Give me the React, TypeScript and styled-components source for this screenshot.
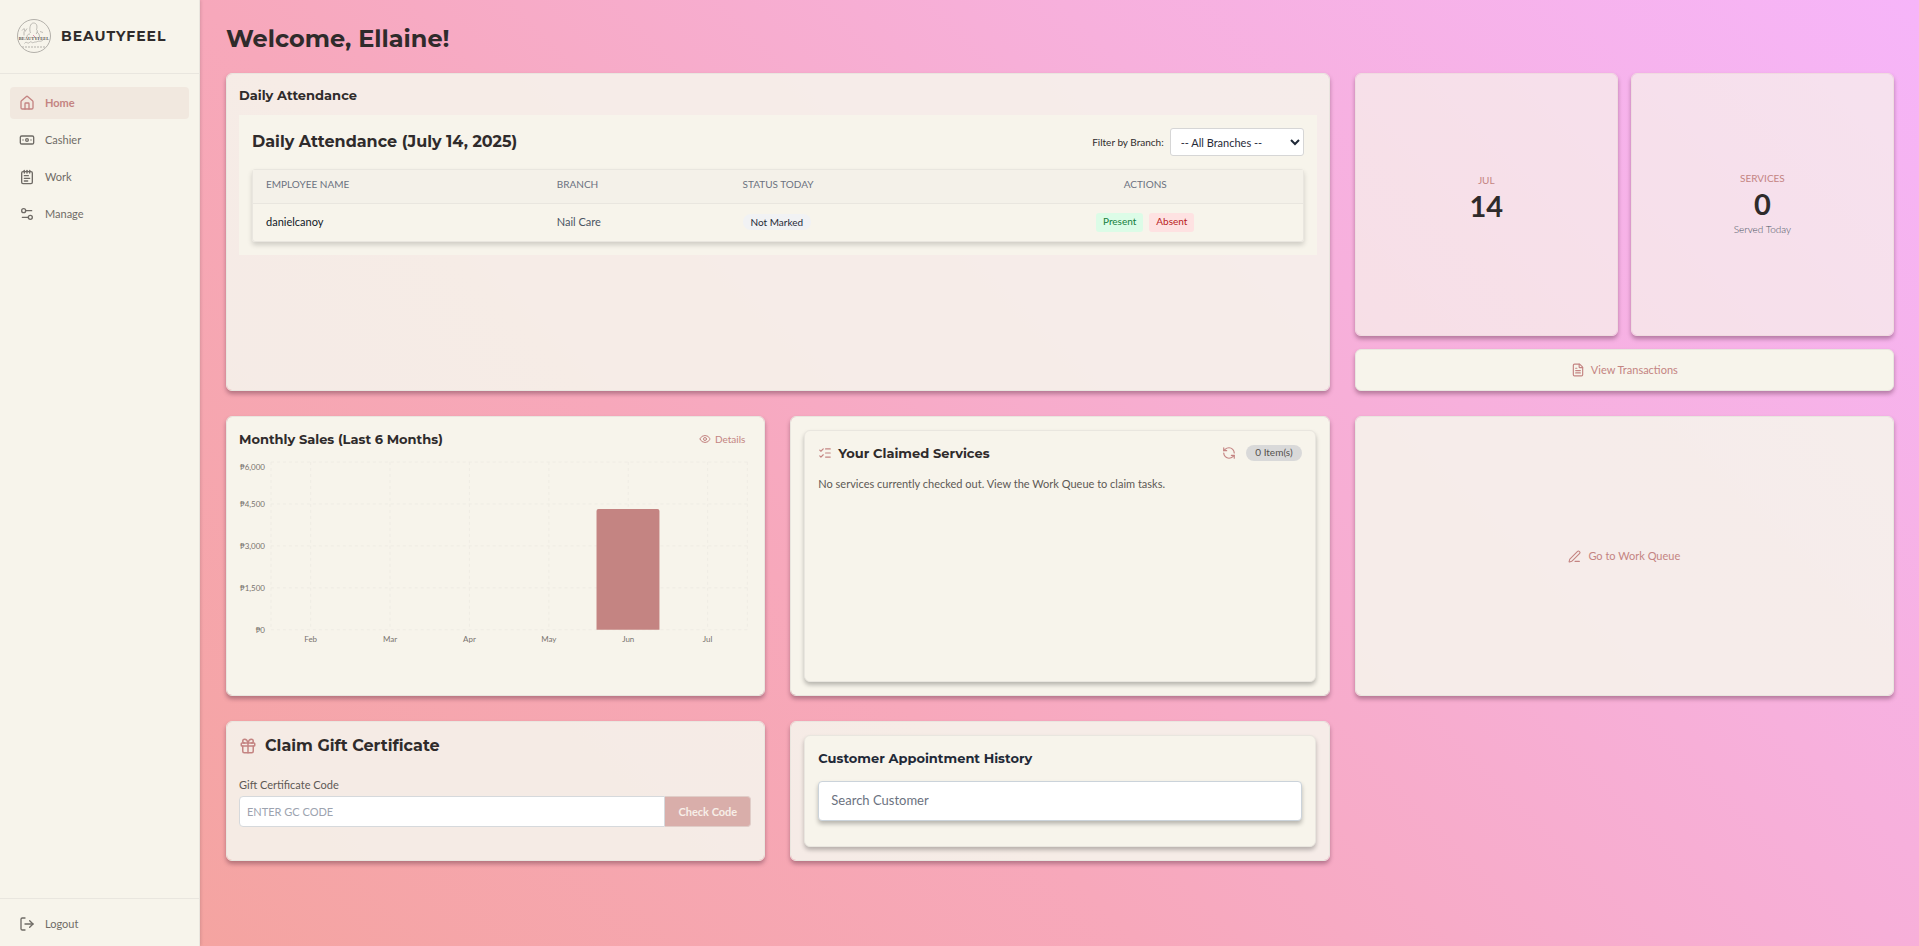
import React from "react";
import styled, { createGlobalStyle, css } from "styled-components";
import {
  House, Banknote, NotepadText, Settings2, LogOut, FileText, Eye, ListChecks,
  RefreshCcw, PenLine, Gift,
} from "lucide-react";

const heading = `"Montserrat", "Inter", sans-serif`;
const ink = "#2f2b2b";
const rose = "#c48482";
const cream = "#f7f4eb";
const line = "#e9e6df";

const Global = createGlobalStyle`
  *, *::before, *::after { box-sizing: border-box; }
  body { margin: 0; font-family: "Lato", sans-serif; font-size: 11px; line-height: 16px; color: ${ink}; }
  h1, h2, h3, p { margin: 0; }
  button, input, select { font: inherit; }
`;

const Shell = styled.div`
  display: flex;
  min-height: 100vh;
  background: linear-gradient(45deg, #f4a39b 0%, #f7a8bb 40%, #f7b0dc 70%, #f6b5f9 100%);
`;
const Sidebar = styled.aside`
  display: flex;
  flex-direction: column;
  flex: none;
  width: 200px;
  background: ${cream};
  border-right: 1px solid ${line};
  box-shadow: 1px 0 3px rgba(0, 0, 0, 0.12);
`;
const Brand = styled.div`
  display: flex;
  align-items: center;
  gap: 9px;
  height: 74px;
  padding: 0 16px 2px;
  border-bottom: 1px solid ${line};
`;
const BrandName = styled.span`
  font-family: ${heading};
  font-weight: 700;
  font-size: 14px;
  letter-spacing: 1px;
`;
const Nav = styled.nav`
  display: flex;
  flex-direction: column;
  gap: 5px;
  padding: 13px 10px;
`;
const NavLink = styled.a<{ $active?: boolean }>`
  display: flex;
  align-items: center;
  gap: 10px;
  height: 32px;
  padding: 0 9px;
  border-radius: 4px;
  color: #6f6b66;
  text-decoration: none;
  ${(p) => p.$active && css`
    color: ${rose};
    font-weight: 700;
    background: #f1e8df;
  `}
`;
const SidebarFoot = styled.div`
  margin-top: auto;
  border-top: 1px solid ${line};
  padding: 9px 10px 6px;
`;
const LogoutButton = styled.button`
  display: flex;
  align-items: center;
  gap: 10px;
  height: 32px;
  width: 100%;
  padding: 0 9px;
  border: 0;
  background: none;
  color: #6f6b66;
`;

const Main = styled.main`
  flex: 1;
  min-width: 0;
  padding: 23px 25px 24px 26px;
`;
const PageTitle = styled.h1`
  font-family: ${heading};
  font-weight: 700;
  font-size: 24px;
  line-height: 32px;
  margin-bottom: 18px;
`;
const Grid = styled.div`
  display: grid;
  grid-template-columns: repeat(3, minmax(0, 1fr));
  gap: 25px;
`;
const Card = styled.section<{ $tone?: "solid" | "veil" | "tint"; $wide?: boolean; $min?: number }>`
  display: flex;
  flex-direction: column;
  min-width: 0;
  padding: 12px;
  border: 1px solid ${line};
  border-radius: 6px;
  min-height: ${(p) => p.$min ?? 0}px;
  background: ${(p) =>
    p.$tone === "veil" ? "rgba(245, 243, 235, 0.9)" : p.$tone === "tint" ? "rgba(247, 244, 235, 0.7)" : cream};
  background-clip: padding-box;
  border-color: ${(p) => (p.$tone === "tint" ? "#f0dbe0" : line)};
  box-shadow: 0 3px 4px rgba(60, 20, 40, 0.35);
  ${(p) => p.$wide && css`grid-column: span 2;`}
`;
const CardTitle = styled.h2<{ $large?: boolean; $navy?: boolean }>`
  font-family: ${heading};
  font-weight: 700;
  font-size: ${(p) => (p.$large ? 16 : 13)}px;
  line-height: ${(p) => (p.$large ? 24 : 18)}px;
  color: ${(p) => (p.$navy ? "#1f2937" : ink)};
`;
const Row = styled.div<{ $gap?: number; $between?: boolean }>`
  display: flex;
  align-items: center;
  gap: ${(p) => p.$gap ?? 8}px;
  justify-content: ${(p) => (p.$between ? "space-between" : "flex-start")};
`;

const AttendancePanel = styled.div`
  margin-top: 11px;
  padding: 13px;
  background: ${cream};
`;
const FilterLabel = styled.label`
  font-size: 10px;
`;
const BranchSelect = styled.select`
  width: 134px;
  height: 28px;
  padding: 0 6px;
  border: 1px solid #d6d6d6;
  border-radius: 3px;
  background: #fff;
  color: #1f2937;
`;
const TableFrame = styled.div`
  margin-top: 13px;
  border: 1px solid ${line};
  border-radius: 3px;
  box-shadow: 0 3px 5px rgba(0, 0, 0, 0.16);
`;
const Table = styled.table`
  width: 100%;
  border-collapse: collapse;
  table-layout: fixed;
  th, td { text-align: left; padding: 0 13px; }
  th {
    height: 33px;
    padding-bottom: 4px;
    font-weight: 400;
    font-size: 10px;
    color: #6b7280;
    background: #f4f1e9;
    border-bottom: 1px solid ${line};
  }
  td { height: 38px; color: #111827; }
  td:nth-child(2) { color: #4b5563; }
  th:last-child { text-align: center; }
`;
const Status = styled.span`
  display: inline-block;
  padding: 0 8px;
  border-radius: 8px;
  background: #f1f2f4;
  color: #1f2937;
  font-size: 10px;
`;
const Actions = styled.div`
  display: flex;
  justify-content: center;
  gap: 6px;
`;
const MarkButton = styled.button<{ $bad?: boolean }>`
  height: 19px;
  padding: 0 7px 2px;
  border: 0;
  border-radius: 3px;
  font-size: 10px;
  line-height: 16px;
  color: ${(p) => (p.$bad ? "#b91c1c" : "#15803d")};
  background: ${(p) => (p.$bad ? "#fee2e2" : "#dcfce7")};
`;

const SideStack = styled.div`
  display: flex;
  flex-direction: column;
  gap: 13px;
`;
const StatRow = styled.div`
  display: grid;
  grid-template-columns: 1fr 1fr;
  gap: 13px;
`;
const StatCard = styled(Card)<{ $raised?: boolean }>`
  aspect-ratio: 1;
  align-items: center;
  justify-content: center;
  padding-bottom: ${(p) => (p.$raised ? 26 : 15)}px;
`;
const StatLabel = styled.p`
  font-size: 10px;
  color: ${rose};
`;
const StatValue = styled.p`
  font-size: 29px;
  line-height: 36px;
  font-weight: 700;
`;
const StatNote = styled.p`
  font-size: 10px;
  font-weight: 300;
  line-height: 14px;
  color: #4b5563;
`;
const WideButton = styled.button`
  display: flex;
  flex: 1;
  align-items: center;
  justify-content: center;
  gap: 6px;
  min-height: 42px;
  padding: 0 0 1px;
  border: 1px solid ${line};
  border-radius: 6px;
  background: ${cream};
  color: ${rose};
  box-shadow: 0 3px 4px rgba(60, 20, 40, 0.35);
`;
const TextButton = styled.button<{ $small?: boolean }>`
  display: inline-flex;
  align-items: center;
  justify-content: center;
  gap: ${(p) => (p.$small ? 4 : 7)}px;
  padding: 0;
  border: 0;
  background: none;
  color: ${rose};
  font-size: ${(p) => (p.$small ? 10 : 11)}px;
`;
const QueueCard = styled(Card)`
  align-items: center;
  justify-content: center;
`;
const ChartHead = styled(Row)`
  padding: 1px 7px 0 0;
`;
const Chart = styled.svg`
  display: block;
  width: 100%;
  height: auto;
  margin-top: 11px;
  text { font-family: "Lato", sans-serif; font-size: 8px; fill: #77736e; }
`;
const InnerCard = styled.div`
  flex: 1;
  margin: 1px;
  padding: 13px;
  border: 1px solid ${line};
  border-radius: 6px;
  background: ${cream};
  box-shadow: 0 3px 4px rgba(0, 0, 0, 0.25);
`;
const CountBadge = styled.span`
  height: 16px;
  padding: 0 9px;
  border-radius: 8px;
  background: #d9d9d9;
  color: #55514d;
  font-size: 10px;
  line-height: 14px;
`;
const EmptyText = styled.p`
  margin-top: 14px;
  color: #5d5955;
`;
const FieldLabel = styled.label`
  margin-top: 19px;
  color: #5d5955;
`;
const CodeRow = styled.div`
  display: flex;
  margin-top: 3px;
  padding-right: 1px;
`;
const CodeInput = styled.input`
  flex: 1;
  min-width: 0;
  height: 31px;
  padding: 0 7px;
  border: 1px solid #d6d9dc;
  border-radius: 4px 0 0 4px;
  &::placeholder { color: #9ca3af; opacity: 1; }
`;
const CheckButton = styled.button`
  height: 31px;
  width: 86px;
  padding: 0;
  border: 1px solid #e0cdc8;
  border-left: 0;
  border-radius: 0 4px 4px 0;
  background: #d9aeaa;
  color: #f7efe8;
  font-weight: 700;
`;
const SearchInput = styled.input`
  display: block;
  width: 100%;
  height: 40px;
  margin-top: 14px;
  padding: 0 12px 2px;
  border: 1px solid #cbd3da;
  border-radius: 4px;
  font-size: 13px;
  box-shadow: 0 3px 4px rgba(0, 0, 0, 0.25);
  &::placeholder { color: #6b7280; opacity: 1; }
`;

const Logo = () => (
  <svg width="36" height="36" viewBox="0 0 72 72" fill="none" aria-label="BeautyFeel logo">
    <circle cx="36" cy="36" r="33" stroke="#b3b0aa" strokeWidth="2" />
    <g stroke="#aaa7a1" strokeWidth="1.500">
      <path d="M29 30c-3-8-1-20 6-20s8 7 6 13c3 3 2 6-1 9M28 32c-4 0-6 2-6 6M41 28c4 2 6 4 6 10" />
      <path d="M12 25l4-4 2 6 4-6M16 27v8M48 27l6 2" />
      <path d="M17 51c4-6 6 2 10-2s4 2 8 0 4 0 8-2 6 2 12-4" />
    </g>
    <text x="36" y="44" textAnchor="middle" fontFamily="Liberation Serif, serif" fontWeight="700" fontSize="9" fill="#5c5855">BEAUTYFEEL</text>
    <path d="M34 34l4 4" stroke="#d994ab" strokeWidth="2" />
    <path d="M12 58h48" stroke="#b3b0aa" strokeWidth="2" strokeDasharray="4 2" />
  </svg>
);

const months = ["Feb", "Mar", "Apr", "May", "Jun", "Jul"];
const ticks = [
  { y: 171, ty: 171, label: "₱0" },
  { y: 129, ty: 129, label: "₱1,500" },
  { y: 87, ty: 87, label: "₱3,000" },
  { y: 45, ty: 45, label: "₱4,500" },
  { y: 3, ty: 8, label: "₱6,000" },
];
const plotLeft = 32;
const plotRight = 509;
const monthX = (i: number) => plotLeft + ((plotRight - plotLeft) / months.length) * (i + 0.5);

const SalesChart = () => (
  <Chart viewBox="0 0 514 190" role="img" aria-label="Monthly sales by month">
    <g stroke="#efece4" strokeDasharray="3 3">
      {ticks.map((t) => <line key={t.label} x1={plotLeft} x2={plotRight} y1={t.y} y2={t.y} />)}
      <line x1={plotLeft} x2={plotLeft} y1="3" y2="171" />
      <line x1={plotRight} x2={plotRight} y1="3" y2="171" />
      {months.map((m, i) => <line key={m} x1={monthX(i)} x2={monthX(i)} y1="3" y2="171" />)}
    </g>
    {ticks.map((t) => <text key={t.label} x="26" y={t.ty + 3} textAnchor="end">{t.label}</text>)}
    {months.map((m, i) => <text key={m} x={monthX(i)} y="183" textAnchor="middle">{m}</text>)}
    <path d="M358 171V52q0-2 2-2h59q2 0 2 2v119z" fill={rose} />
  </Chart>
);

const navItems = [
  { label: "Home", Icon: House, active: true },
  { label: "Cashier", Icon: Banknote },
  { label: "Work", Icon: NotepadText },
  { label: "Manage", Icon: Settings2 },
];

export default function App() {
  return (
    <>
      <Global />
      <Shell>
        <Sidebar>
          <Brand>
            <Logo />
            <BrandName>BEAUTYFEEL</BrandName>
          </Brand>
          <Nav>
            {navItems.map(({ label, Icon, active }) => (
              <NavLink key={label} href="#" $active={active}>
                <Icon size={16} />
                {label}
              </NavLink>
            ))}
          </Nav>
          <SidebarFoot>
            <LogoutButton type="button"><LogOut size={16} />Logout</LogoutButton>
          </SidebarFoot>
        </Sidebar>
        <Main>
          <PageTitle>Welcome, Ellaine!</PageTitle>
          <Grid>
            <Card $wide $tone="veil">
              <CardTitle>Daily Attendance</CardTitle>
              <AttendancePanel>
                <Row $between>
                  <CardTitle $large>Daily Attendance (July 14, 2025)</CardTitle>
                  <Row $gap={6}>
                    <FilterLabel htmlFor="branch">Filter by Branch:</FilterLabel>
                    <BranchSelect id="branch"><option>-- All Branches --</option></BranchSelect>
                  </Row>
                </Row>
                <TableFrame>
                  <Table>
                    <colgroup>
                      <col style={{ width: "27.700%" }} />
                      <col style={{ width: "17.700%" }} />
                      <col style={{ width: "24.600%" }} />
                      <col />
                    </colgroup>
                    <thead>
                      <tr><th>EMPLOYEE NAME</th><th>BRANCH</th><th>STATUS TODAY</th><th>ACTIONS</th></tr>
                    </thead>
                    <tbody>
                      <tr>
                        <td>danielcanoy</td>
                        <td>Nail Care</td>
                        <td><Status>Not Marked</Status></td>
                        <td>
                          <Actions>
                            <MarkButton type="button">Present</MarkButton>
                            <MarkButton type="button" $bad>Absent</MarkButton>
                          </Actions>
                        </td>
                      </tr>
                    </tbody>
                  </Table>
                </TableFrame>
              </AttendancePanel>
            </Card>
            <SideStack>
              <StatRow>
                <StatCard $tone="tint" $raised>
                  <StatLabel>JUL</StatLabel>
                  <StatValue>14</StatValue>
                </StatCard>
                <StatCard $tone="tint">
                  <StatLabel>SERVICES</StatLabel>
                  <StatValue>0</StatValue>
                  <StatNote>Served Today</StatNote>
                </StatCard>
              </StatRow>
              <WideButton type="button"><FileText size={14} />View Transactions</WideButton>
            </SideStack>

            <Card $min={280}>
              <ChartHead $between>
                <CardTitle>Monthly Sales (Last 6 Months)</CardTitle>
                <TextButton type="button" $small><Eye size={12} />Details</TextButton>
              </ChartHead>
              <SalesChart />
            </Card>
            <Card $min={280}>
              <InnerCard>
                <Row $between>
                  <Row $gap={6}>
                    <ListChecks size={14} color={rose} />
                    <CardTitle>Your Claimed Services</CardTitle>
                  </Row>
                  <Row $gap={10}>
                    <TextButton type="button" aria-label="Refresh"><RefreshCcw size={14} /></TextButton>
                    <CountBadge>0 Item(s)</CountBadge>
                  </Row>
                </Row>
                <EmptyText>No services currently checked out. View the Work Queue to claim tasks.</EmptyText>
              </InnerCard>
            </Card>
            <QueueCard $tone="veil">
              <TextButton type="button"><PenLine size={13} />Go to Work Queue</TextButton>
            </QueueCard>

            <Card $tone="veil" $min={140}>
              <Row $gap={8}>
                <Gift size={18} color={rose} />
                <CardTitle $large>Claim Gift Certificate</CardTitle>
              </Row>
              <FieldLabel htmlFor="gc">Gift Certificate Code</FieldLabel>
              <CodeRow>
                <CodeInput id="gc" placeholder="ENTER GC CODE" />
                <CheckButton type="button">Check Code</CheckButton>
              </CodeRow>
            </Card>
            <Card $tone="veil" $min={140}>
              <InnerCard>
                <CardTitle $navy>Customer Appointment History</CardTitle>
                <SearchInput aria-label="Search Customer" placeholder="Search Customer" />
              </InnerCard>
            </Card>
          </Grid>
        </Main>
      </Shell>
    </>
  );
}
